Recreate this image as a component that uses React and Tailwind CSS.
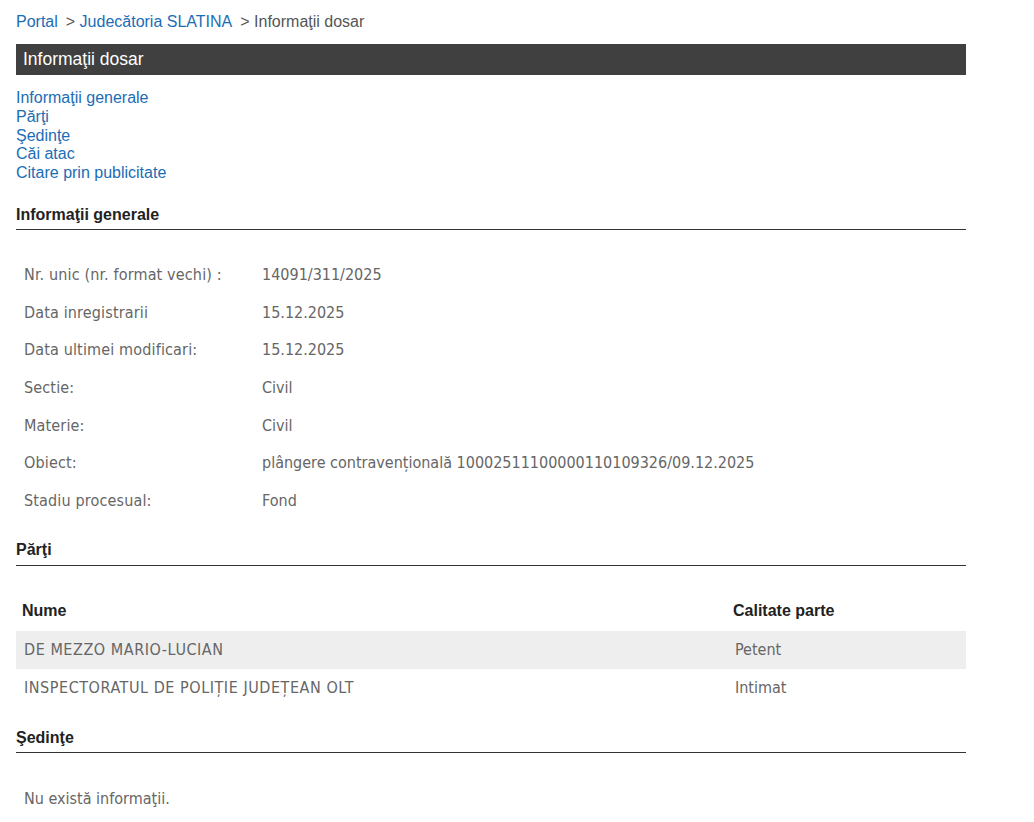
export default function App() {
  const rows = [
    ["Nr. unic (nr. format vechi) :", "14091/311/2025"],
    ["Data inregistrarii", "15.12.2025"],
    ["Data ultimei modificari:", "15.12.2025"],
    ["Sectie:", "Civil"],
    ["Materie:", "Civil"],
    ["Obiect:", "plângere contravențională 10002511100000110109326/09.12.2025"],
    ["Stadiu procesual:", "Fond"],
  ];
  const arial = { fontFamily: '"Liberation Sans", Arial, sans-serif' };
  const tahoma = { fontFamily: '"DejaVu Sans Condensed", "DejaVu Sans", Tahoma, sans-serif' };
  return (
    <div className="bg-white min-h-screen pl-4 w-[966px]" style={arial}>
      <div className="pt-[12px] text-[16px] leading-[20px] text-[#555]">
        <a className="text-[#1b6db5]">Portal</a>
        <span className="ml-[8px]">&gt; </span>
        <a className="text-[#1b6db5]">Judecătoria SLATINA</a>
        <span className="ml-[8px]">&gt; Informaţii dosar</span>
      </div>
      <div className="mt-[12px] h-[31px] bg-[#404040] text-white text-[17.5px] leading-[31px] pl-[7px]">
        Informaţii dosar
      </div>
      <div className="mt-[14px] flex flex-col text-[16px] leading-[18.8px] text-[#1b6db5]">
        <a>Informaţii generale</a>
        <a>Părţi</a>
        <a>Şedinţe</a>
        <a>Căi atac</a>
        <a>Citare prin publicitate</a>
      </div>
      <div className="mt-[23px] border-b border-[#333] pb-[5px] text-[16px] leading-[18px] font-bold text-[#222]">
        Informaţii generale
      </div>
      <div className="mt-[26px] text-[#666] text-[16px]" style={tahoma}>
        {rows.map(([k, v]) => (
          <div key={k} className="flex h-[37.7px] items-center">
            <div className="w-[246px] pl-[8px] tracking-[0.15px]">{k}</div>
            <div>{v}</div>
          </div>
        ))}
      </div>
      <div className="mt-[21px] border-b border-[#333] pb-[6px] text-[16px] leading-[18px] font-bold text-[#222]">
        Părţi
      </div>
      <div className="mt-[26px]">
        <div className="flex h-[39px] items-center text-[16px] font-bold text-[#222]">
          <div className="w-[717px] pl-[6px]">Nume</div>
          <div>Calitate parte</div>
        </div>
        {[
          ["DE MEZZO MARIO-LUCIAN", "Petent", true],
          ["INSPECTORATUL DE POLIȚIE JUDEȚEAN OLT", "Intimat", false],
        ].map(([n, c, bg]) => (
          <div
            key={n}
            className={"flex h-[38px] items-center text-[16px] text-[#666] " + (bg ? "bg-[#eeeeee]" : "")}
            style={tahoma}
          >
            <div className="w-[711px] pl-[8px] tracking-[0.55px]">{n}</div>
            <div className="pl-[8px]">{c}</div>
          </div>
        ))}
      </div>
      <div className="mt-[22px] border-b border-[#333] pb-[5px] text-[16px] leading-[18px] font-bold text-[#222]">
        Şedinţe
      </div>
      <div className="mt-[34px] pl-[8px] text-[16px] text-[#666]" style={tahoma}>
        Nu există informaţii.
      </div>
    </div>
  );
}
